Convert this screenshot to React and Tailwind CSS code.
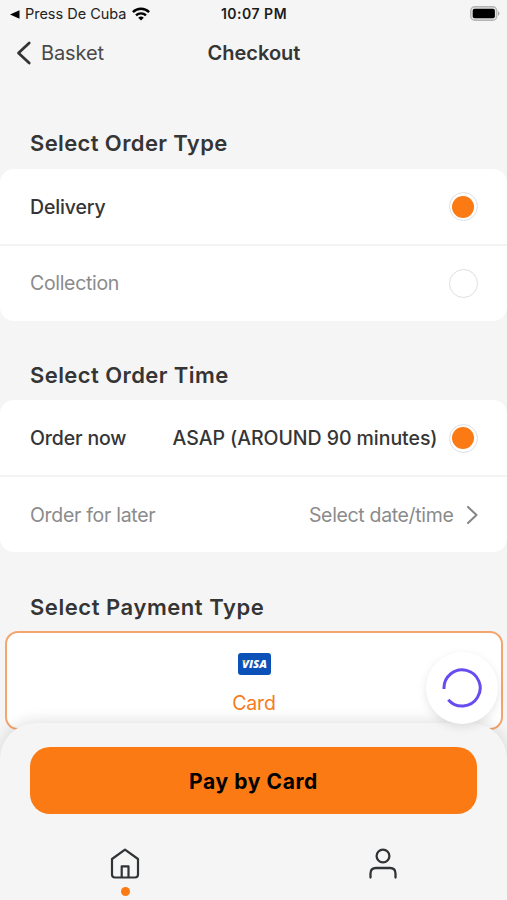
function T({ className, children }) {
  return <span className={`whitespace-nowrap leading-6 ${className}`}>{children}</span>;
}

function Radio({ checked }) {
  return (
    <span className="flex h-[29px] w-[29px] shrink-0 items-center justify-center rounded-full border border-[#dfdfe2] bg-white">
      {checked && <span className="h-[22px] w-[22px] rounded-full bg-[#fb7a14]" />}
    </span>
  );
}

function Heading({ children, className }) {
  return (
    <h2 className={`h-6 pl-[30px] text-[22px] font-semibold leading-6 text-[#353535] ${className}`}>
      <span className="whitespace-nowrap">{children}</span>
    </h2>
  );
}

function Row({ children, className = "" }) {
  return <div className={`flex h-[75px] items-center justify-between pl-[30px] pr-[29.500px] ${className}`}>{children}</div>;
}

export default function App() {
  return (
    <div className="relative flex h-[900px] w-[507px] flex-col overflow-hidden bg-[#f5f5f5] font-['Inter','Liberation_Sans',sans-serif] text-[#353535]">
      <div className="grid h-7 shrink-0 grid-cols-3 items-center pl-[10px] pr-[7px] text-black">
        <div className="flex items-center">
          <svg width="10" height="9" viewBox="0 0 10 9"><path d="M0 4.5 9.5.3v8.4z" /></svg>
          <T className="ml-[5px] text-[14.5px] tracking-[-0.02px] text-[#222]">Press De Cuba</T>
          <svg className="ml-[6px]" width="18" height="14" viewBox="0 0 18 14" fill="none" stroke="black" strokeWidth="2.4">
            <path d="M.9 5.1a11.5 11.5 0 0 1 16.2 0M4 8.4a7.1 7.1 0 0 1 10 0" />
            <path d="M9 13.6 6.2 10.8a4 4 0 0 1 5.6 0z" fill="black" stroke="none" />
          </svg>
        </div>
        <T className="-ml-[2px] text-center text-[14px] font-semibold tracking-[0.5px] text-[#1c1c1c]">10:07 PM</T>
        <svg className="mb-px justify-self-end" width="30" height="15" viewBox="0 0 30 15">
          <rect x=".75" y=".75" width="26" height="13.5" rx="4" fill="#e2e2e2" stroke="#b4b4b4" strokeWidth="1.3" />
          <rect x="2.7" y="2.7" width="22.2" height="9.6" rx="2" />
          <path d="M28 5q3 2.5 0 5z" fill="#aaa" />
        </svg>
      </div>
      <header className="grid h-[49px] shrink-0 grid-cols-3 items-center pl-4 pr-4">
        <div className="flex items-center">
          <svg width="16" height="24" viewBox="0 0 16 24" fill="none" stroke="#353535" strokeWidth="2.8" strokeLinecap="round" strokeLinejoin="round"><path d="M13.2 2 2.5 12l10.7 10" /></svg>
          <T className="ml-[9px] text-[20px] tracking-[-0.1px] text-[#4a4a4a]">Basket</T>
        </div>
        <T className="pl-px text-center text-[20px] font-semibold">Checkout</T>
      </header>

      <main className="flex flex-col">
        <Heading className="mt-[54px] tracking-[0.38px]">Select Order Type</Heading>
        <section className="mt-[14px] h-[152px] rounded-[14px] bg-white">
          <Row>
            <T className="text-[19.5px] font-medium tracking-[-0.15px]">Delivery</T>
            <Radio checked />
          </Row>
          <div className="h-[2px] bg-[#f3f3f3]" />
          <Row className="pb-px">
            <T className="text-[19.5px] tracking-[-0.32px] text-[#8b8b8b]">Collection</T>
            <Radio />
          </Row>
        </section>
        <Heading className="mt-[42px] tracking-[0.42px]">Select Order Time</Heading>
        <section className="mt-[13px] h-[152px] rounded-[14px] bg-white">
          <Row className="pt-px">
            <T className="text-[19.5px] font-medium tracking-[-0.15px]">Order now</T>
            <div className="flex items-center gap-[11px]">
              <T className="text-[19.5px] font-medium tracking-[-0.05px]">ASAP (AROUND 90 minutes)</T>
              <Radio checked />
            </div>
          </Row>
          <div className="h-[2px] bg-[#f3f3f3]" />
          <Row>
            <T className="text-[19.5px] tracking-[-0.3px] text-[#8b8b8b]">Order for later</T>
            <div className="flex items-center gap-[12px]">
              <T className="text-[19.5px] tracking-[-0.34px] text-[#8b8b8b]">Select date/time</T>
              <svg width="12" height="18" viewBox="0 0 12 18" fill="none" stroke="#858585" strokeWidth="2" strokeLinecap="round" strokeLinejoin="round"><path d="m2 1 8.5 8L2 17" /></svg>
            </div>
          </Row>
        </section>
        <Heading className="mt-[43px] tracking-[0.55px]">Select Payment Type</Heading>
        <section className="ml-[5px] mr-[4px] mt-[12px] flex h-[99px] flex-col items-center rounded-[13px] border-2 border-[#f4a56d] bg-white pt-[20px]">
          <div className="flex h-[22px] w-[33px] items-center justify-center rounded-[3px] bg-[#0b51b7]">
            <svg width="31" height="20" viewBox="0 0 31 20"><text x="15.5" y="14" textAnchor="middle" textLength="25" lengthAdjust="spacingAndGlyphs" fill="white" fontFamily="Open Sans" fontSize="11" fontStyle="italic" fontWeight="800">VISA</text><path d="m3 6 2.500.3 1 3.200z" fill="#e8a33a" /></svg>
          </div>
          <T className="mt-[16px] text-[19.5px] tracking-[-0.2px] text-[#f57c20]">Card</T>
        </section>
      </main>

      <div className="absolute inset-x-0 bottom-0 flex h-[177px] flex-col rounded-t-[36px] bg-[#f5f5f5] px-[30px] pt-[24px] shadow-[0_-3px_14px_rgba(0,0,0,0.11)]">
        <button className="h-[67px] w-[447px] shrink-0 rounded-[20px] bg-[#fb7a14] pt-[2px] text-[21px] font-bold leading-6 tracking-[0.6px] text-black">
          <span className="whitespace-nowrap">Pay by Card</span>
        </button>
        <nav className="-mx-[4px] mt-[33px] flex justify-between pl-[82px] pr-[81px]">
          <div className="flex w-[34px] flex-col items-center">
            <svg width="34" height="34" viewBox="0 0 34 34" fill="none" stroke="#303437" strokeWidth="2.2" strokeLinejoin="round"><path d="M17 2.7 30 12v15.5q0 3-3 3H7q-3 0-3-3V12zM13.7 30V19.3h6.8V30" /></svg>
            <span className="mt-[6px] h-[9px] w-[9px] rounded-full bg-[#fb7a14]" />
          </div>
          <svg width="34" height="34" viewBox="0 0 34 34" fill="none" stroke="#303437" strokeWidth="2.3" strokeLinecap="round"><circle cx="17" cy="9" r="6.4" /><path d="M4.5 30.5v-4q0-5.5 5.5-5.5h14q5.5 0 5.5 5.5v4" /></svg>
        </nav>
      </div>

      <div className="absolute left-[426px] top-[652px] flex h-[72px] w-[72px] items-center justify-center rounded-full bg-white shadow-[0_3px_10px_rgba(0,0,0,0.10)]">
        <svg width="42" height="42" viewBox="0 0 42 42" fill="none" stroke="#684cf0" strokeWidth="3" strokeLinecap="butt"><path d="M3 22A18.1 18.1 0 1 1 7.3 32.7" /></svg>
      </div>
    </div>
  );
}
